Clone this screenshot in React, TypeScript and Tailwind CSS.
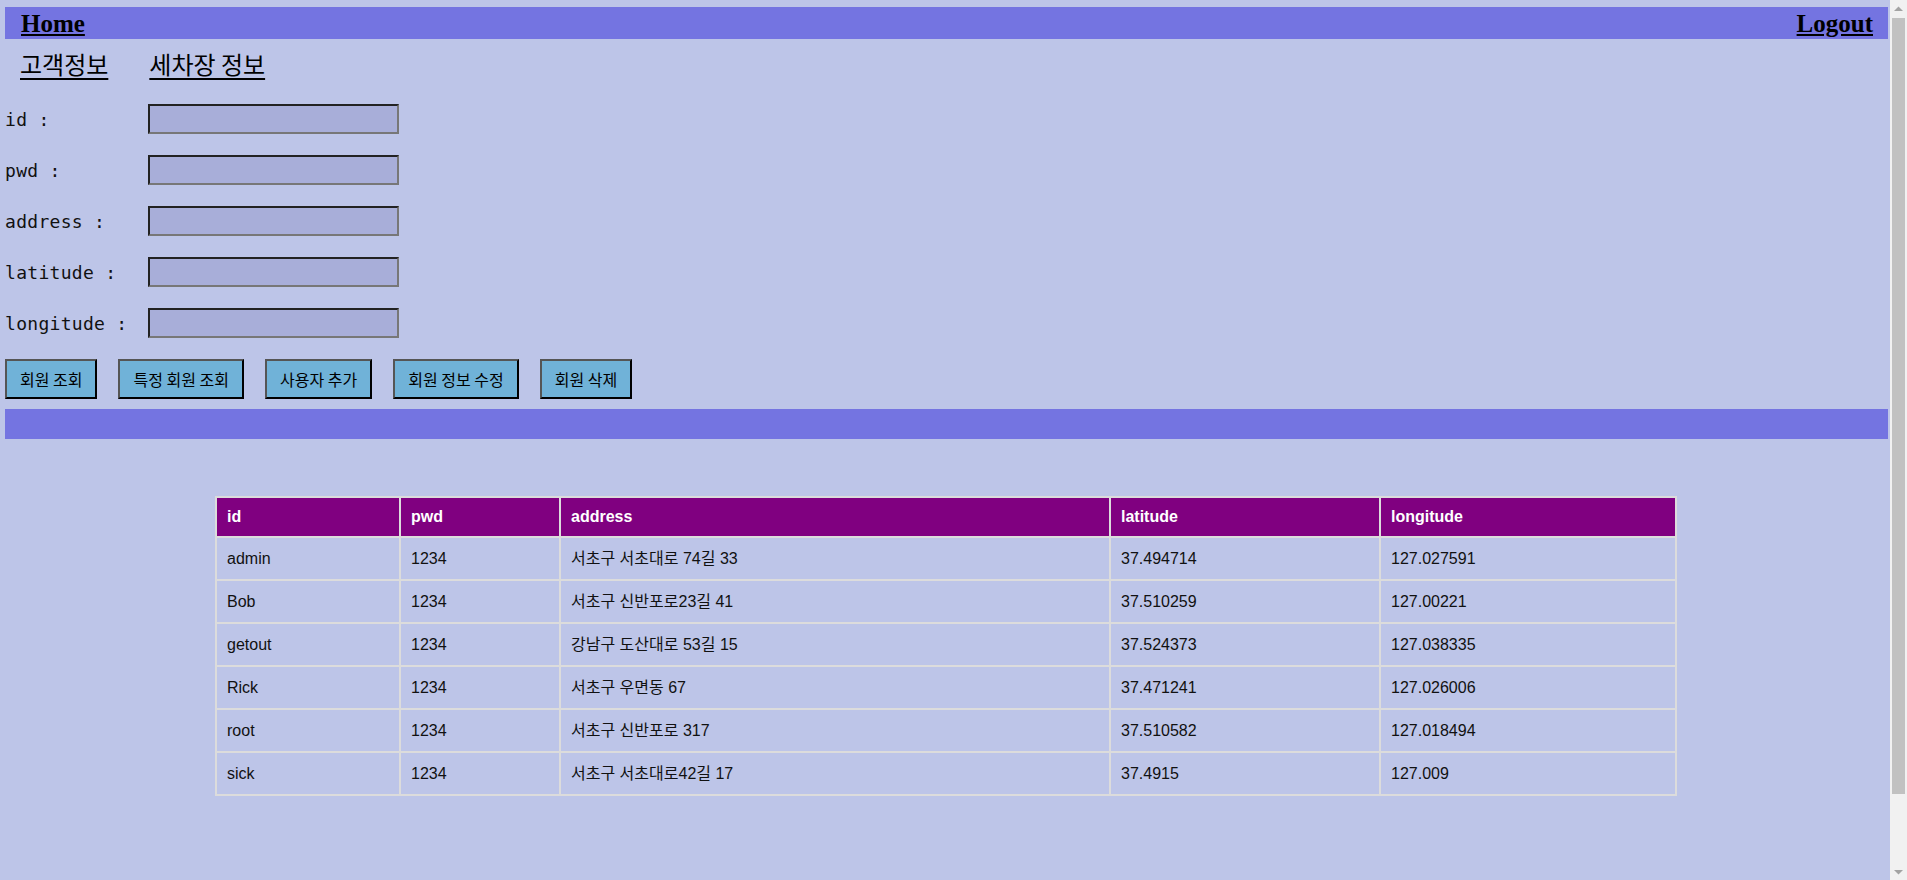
import React from "react";

const rows = [
  { id: "admin", pwd: "1234", address: "서초구 서초대로 74길 33", lat: "37.494714", lng: "127.027591" },
  { id: "Bob", pwd: "1234", address: "서초구 신반포로23길 41", lat: "37.510259", lng: "127.00221" },
  { id: "getout", pwd: "1234", address: "강남구 도산대로 53길 15", lat: "37.524373", lng: "127.038335" },
  { id: "Rick", pwd: "1234", address: "서초구 우면동 67", lat: "37.471241", lng: "127.026006" },
  { id: "root", pwd: "1234", address: "서초구 신반포로 317", lat: "37.510582", lng: "127.018494" },
  { id: "sick", pwd: "1234", address: "서초구 서초대로42길 17", lat: "37.4915", lng: "127.009" },
];

const fields = ["id", "pwd", "address", "latitude", "longitude"];
const buttons = ["회원 조회", "특정 회원 조회", "사용자 추가", "회원 정보 수정", "회원 삭제"];

// browser scrollbar as seen in the screenshot
function Scrollbar() {
  return (
    <div className="w-[17px] h-[880px] shrink-0 bg-[#f1f1f1] flex flex-col items-center">
      <div className="h-[17px] flex items-center justify-center">
        <svg width="9" height="6" viewBox="0 0 9 6"><path d="M0 5 L4.5 0.5 L9 5 Z" fill="#a3a3a3" /></svg>
      </div>
      <div className="w-[13px] h-[776px] mt-[1px] bg-[#c1c1c1]" />
      <div className="flex-1" />
      <div className="h-[17px] flex items-center justify-center">
        <svg width="9" height="6" viewBox="0 0 9 6"><path d="M0 1 L4.5 5.5 L9 1 Z" fill="#a3a3a3" /></svg>
      </div>
    </div>
  );
}

export default function App() {
  return (
    <div className="flex h-[880px] overflow-hidden bg-[#bdc5e8]">
      <div className="w-[1890px] shrink-0 pt-[7px] pl-[5px] pr-[2px] text-black">
        {/* top nav */}
        <div className="h-[32px] bg-[#7474e1] flex items-center justify-between pl-[16px] pr-[15px] font-['Liberation_Serif',serif] font-bold text-[25px]">
          <a href="#" className="underline leading-none">Home</a>
          <a href="#" className="underline leading-none">Logout</a>
        </div>

        <div className="flex gap-[41px] pl-[15px] mt-[11px] font-['Noto_Sans_CJK_KR',sans-serif] text-[24px] leading-[28px]">
          <a href="#" className="underline underline-offset-4">고객정보</a>
          <a href="#" className="underline underline-offset-4">세차장 정보</a>
        </div>

        {/* form */}
        <div className="flex flex-col gap-[21px] mt-[26px]">
          {fields.map((f) => (
            <div key={f} className="flex items-center">
              <label className="w-[143px] font-['DejaVu_Sans_Mono',monospace] text-[18px] tracking-[0.3px] text-[#111]">
                {f} :
              </label>
              <input className="w-[251px] h-[30px] bg-[#a8aed9] border-2 border-t-[#222] border-l-[#222] border-b-[#777] border-r-[#777] outline-none" />
            </div>
          ))}
        </div>

        <div className="flex gap-[21px] mt-[21px]">
          {buttons.map((b) => (
            <button
              key={b}
              className="h-[40px] px-[13px] bg-[#70b2d8] border-2 border-t-[#555] border-l-[#555] border-b-black border-r-black font-['Noto_Sans_CJK_KR',sans-serif] text-[16px]"
            >
              {b}
            </button>
          ))}
        </div>

        <div className="h-[30px] bg-[#7474e1] mt-[10px]" />

        {/* table */}
        <div className="pt-[57px] pr-[1px]">
          <table className="w-[1460px] mx-auto table-fixed border-collapse font-['Liberation_Sans','Noto_Sans_CJK_KR',sans-serif] text-[16px]">
            <colgroup>
              <col className="w-[184px]" />
              <col className="w-[160px]" />
              <col className="w-[550px]" />
              <col className="w-[270px]" />
              <col className="w-[296px]" />
            </colgroup>
            <thead>
              <tr className="h-[40px] bg-[#800080] text-white">
                {fields.map((f) => (
                  <th key={f} className="border-2 border-[#dcdcdc] text-left font-bold px-[10px]">
                    {f}
                  </th>
                ))}
              </tr>
            </thead>
            <tbody>
              {rows.map((r) => (
                <tr key={r.id} className="h-[43px]">
                  {[r.id, r.pwd, r.address, r.lat, r.lng].map((v, i) => (
                    <td key={i} className="border-2 border-[#dcdcdc] px-[10px] text-[#111]">
                      {v}
                    </td>
                  ))}
                </tr>
              ))}
            </tbody>
          </table>
        </div>
      </div>
      <Scrollbar />
    </div>
  );
}
